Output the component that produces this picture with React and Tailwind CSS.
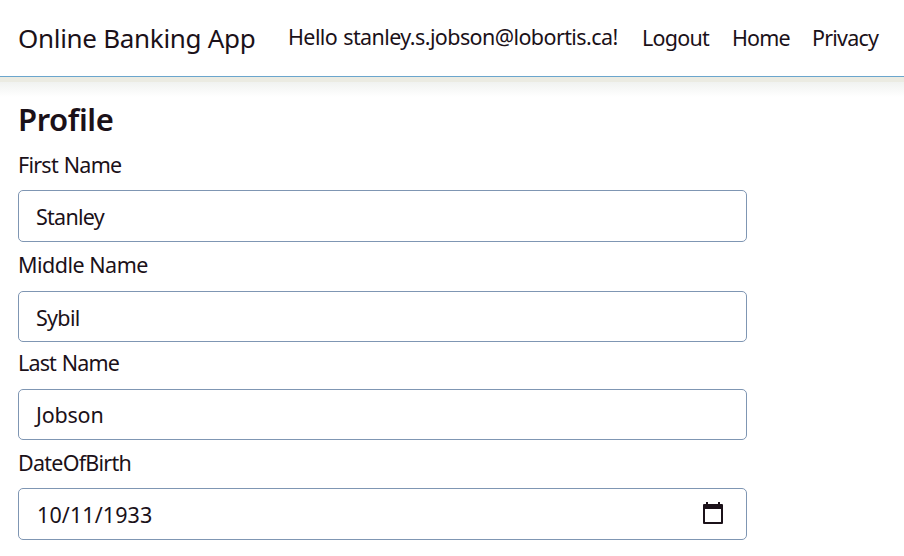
import { clsx } from "clsx";

const links = [
  { text: "Hello stanley.s.jobson@lobortis.ca!", className: "w-[354px] tracking-[-0.59px] [word-spacing:1px] pb-0.5" },
  { text: "Logout", className: "w-[90px] tracking-[-0.75px] pt-px" },
  { text: "Home", className: "w-[80px] tracking-[-0.85px] pt-px" },
  { text: "Privacy", className: "w-[68px] tracking-[-0.8px] pt-px" },
];

const fields = [
  { label: "First Name", value: "Stanley", labelClass: "h-[41px] tracking-[-0.75px] [word-spacing:1px]", boxClass: "h-[52px] pt-0.5 pl-[17px] tracking-[-0.75px]" },
  { label: "Middle Name", value: "Sybil", labelClass: "h-[49px] pt-[7px] tracking-[-0.5px]", boxClass: "h-[51px] pl-[17px] pt-[3px] tracking-[-0.7px]" },
  { label: "Last Name", value: "Jobson", labelClass: "h-[47px] pt-[5px] tracking-[-0.85px] [word-spacing:1px]", boxClass: "h-[51px] pt-px pl-[17px] tracking-[-0.2px]" },
  { label: "DateOfBirth", value: "10/11/1933", labelClass: "h-12 pt-[7px] tracking-[-0.75px]", boxClass: "h-[52px] pt-0.5 pl-[18px] tracking-[0.1px]", date: true },
];

function CalendarIcon() {
  return (
    <svg className="mr-[23px] mt-[11px] block h-[22px] w-5 self-start" viewBox="0 0 20 22" fill="#1b1119">
      <path fillRule="evenodd" d="M3 0h2v2h10V0h2v2h2q1 0 1 1v18q0 1-1 1H1q-1 0-1-1V3q0-1 1-1h2zM2 7v13h16V7z" />
    </svg>
  );
}

export default function App() {
  return (
    <div className="h-[556px] w-[904px] overflow-hidden bg-white font-['Noto_Sans',sans-serif] text-[21.5px] leading-8 text-[#1b1119]">
      <header className="flex h-[77px] items-center border-b border-[#6ba6cd] pl-[18px]">
        <div className="w-[270px] shrink-0 whitespace-nowrap text-[26px] tracking-[-0.3px]">Online Banking App</div>
        <nav className="flex">
          {links.map((link) => (
            <a key={link.text} className={clsx("shrink-0 whitespace-nowrap", link.className)}>
              {link.text}
            </a>
          ))}
        </nav>
      </header>
      <div className="h-[5px] bg-[#ebebe2]" />
      <div className="h-[15px] bg-linear-to-b from-[#f0f2f0] to-white" />
      <main className="pl-[18px]">
        <h1 className="h-[52px] text-[31px] font-semibold leading-[44px] tracking-[-0.4px]">Profile</h1>
        {fields.map((field) => (
          <div key={field.label} className="w-[729px]">
            <div className={field.labelClass}>{field.label}</div>
            <div className={clsx("flex items-center justify-between rounded-[5px] border border-[#7f96b3]", field.boxClass)}>
              <span>{field.value}</span>
              {field.date && <CalendarIcon />}
            </div>
          </div>
        ))}
      </main>
    </div>
  );
}
